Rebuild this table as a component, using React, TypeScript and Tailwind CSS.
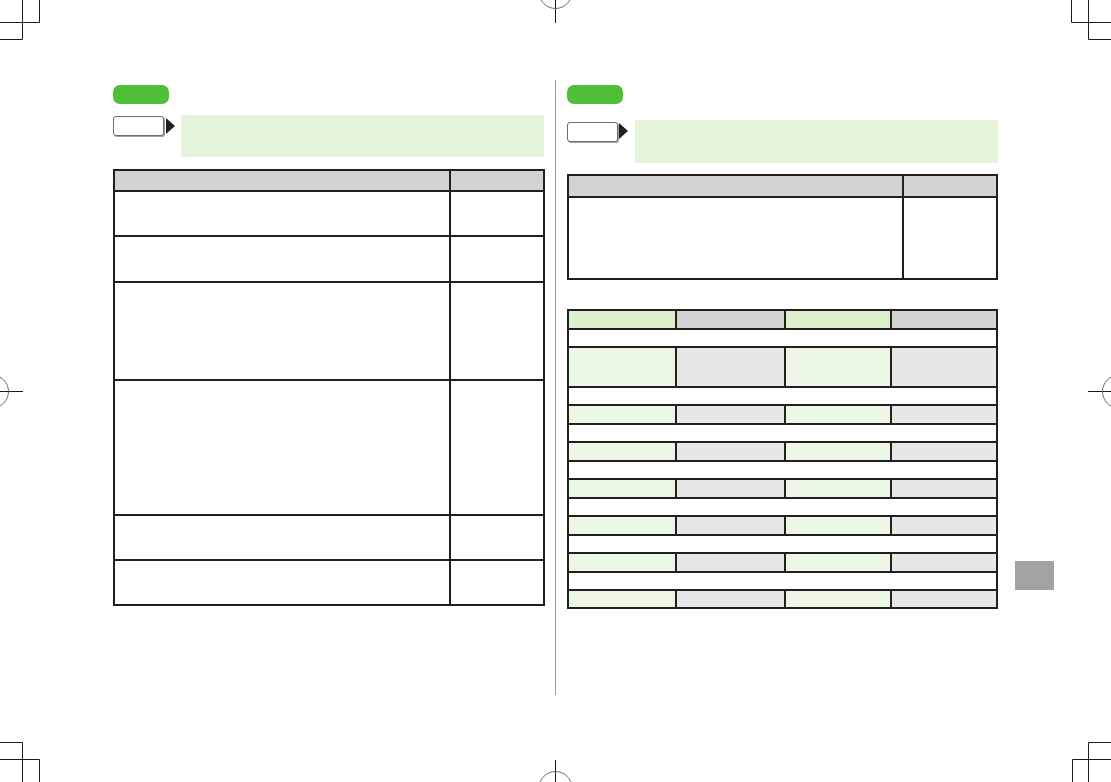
import React from 'react';

// printer's trim marks and registration marks around the page
const PageMarks = () => (
    <svg className="absolute inset-0 pointer-events-none" width={1111} height={782} viewBox="0 0 1111 782" fill="none">
        <g stroke="#1a1a1a" strokeWidth={1}>
            {/* top left */}
            <path d="M22.5 0V39.5M39.5 0V22.5M0 22.5H39.5M0 39.5H22.5" />
            {/* top right */}
            <path d="M1088.5 0V39.5M1071.5 0V22.5M1071.5 22.5H1111M1088.5 39.5H1111" />
            {/* bottom left */}
            <path d="M22.5 742.5V782M39.5 759.5V782M0 742.5H22.5M0 759.5H39.5" />
            {/* bottom right */}
            <path d="M1088.5 742.5V782M1072.5 759.5V782M1088.5 742.5H1111M1072.5 759.5H1111" />
            {/* register lines */}
            <path d="M555.5 0V23M555.5 760V782M0 391.5H23M1088 391.5H1111" />
        </g>
        <g stroke="#6b6b6b" strokeWidth={1}>
            <circle cx={555.5} cy={-8} r={16.5} />
            <circle cx={555.5} cy={788} r={16.5} />
            <circle cx={-8} cy={391.5} r={16.5} />
            <circle cx={1119} cy={391.5} r={16.5} />
        </g>
    </svg>
);

const Pill = () => <div className="w-[56px] h-[19px] rounded-[7px] bg-[#4fbf37]" />;

const StepBox = ({ gap }: { gap: string }) => (
    <div className="flex items-start">
        <div className="mt-[1px] w-[51px] h-[20px] rounded-[3px] border border-[#6d6d6d] bg-white shadow-[1px_1px_0_#a0a0a0]" />
        <svg className="ml-[2px] mt-[3px]" width={9} height={16} viewBox="0 0 9 16">
            <path d="M0 0L9 8L0 16Z" fill="#231f20" />
        </svg>
        <div className={`${gap} w-[363px] h-[42px] bg-[#e3f4db]`} />
    </div>
);

const leftRows = [43, 44, 96, 133, 43, 43];

const table2Rows: { kind: 'data' | 'blank'; h: string }[] = [
    { kind: 'blank', h: 'h-[16px]' },
    { kind: 'data', h: 'h-[38px]' },
    { kind: 'blank', h: 'h-[16px]' },
    { kind: 'data', h: 'h-[17px]' },
    { kind: 'blank', h: 'h-[16px]' },
    { kind: 'data', h: 'h-[17px]' },
    { kind: 'blank', h: 'h-[16px]' },
    { kind: 'data', h: 'h-[17px]' },
    { kind: 'blank', h: 'h-[16px]' },
    { kind: 'data', h: 'h-[17px]' },
    { kind: 'blank', h: 'h-[16px]' },
    { kind: 'data', h: 'h-[17px]' },
    { kind: 'blank', h: 'h-[16px]' },
    { kind: 'data', h: 'h-[16px]' },
];

const App = () => {
    return (
        <div className="relative w-[1111px] h-[782px] overflow-hidden bg-white font-['Liberation_Sans',sans-serif]">
            <div className="flex pt-[85px] pl-[113px]">
                {/* left page */}
                <section className="w-[432px]">
                    <Pill />
                    <div className="mt-[11px]">
                        <StepBox gap="ml-[6px]" />
                    </div>
                    <div className="mt-[12px] grid grid-cols-[334px_92px] gap-[2px] p-[2px] bg-[#231f20]">
                        <div className="h-[19px] bg-[#d2d2d2]" />
                        <div className="h-[19px] bg-[#d2d2d2]" />
                        {leftRows.map((h, i) => (
                            <React.Fragment key={i}>
                                <div className="bg-white" style={{ height: h }} />
                                <div className="bg-white" style={{ height: h }} />
                            </React.Fragment>
                        ))}
                    </div>
                </section>

                <div className="ml-[10px] mt-[-5px] w-px h-[615px] bg-[#9d9d9d]" />

                {/* right page */}
                <section className="ml-[11px] w-[431px]">
                    <Pill />
                    <div className="mt-[16px]">
                        <div className="flex items-start">
                            <div className="mt-[2px] w-[51px] h-[20px] rounded-[3px] border border-[#6d6d6d] bg-white shadow-[1px_1px_0_#a0a0a0]" />
                            <svg className="ml-[1px] mt-[3px]" width={9} height={16} viewBox="0 0 9 16">
                                <path d="M0 0L9 8L0 16Z" fill="#231f20" />
                            </svg>
                            <div className="ml-[7px] w-[363px] h-[43px] bg-[#e3f4db]" />
                        </div>
                    </div>

                    <div className="mt-[11px] grid grid-cols-[333px_92px] gap-[2px] p-[2px] bg-[#231f20]">
                        <div className="h-[20px] bg-[#d2d2d2]" />
                        <div className="h-[20px] bg-[#d2d2d2]" />
                        <div className="h-[80px] bg-white" />
                        <div className="h-[80px] bg-white" />
                    </div>

                    <div className="mt-[29px] grid grid-cols-[106px_107px_104px_104px] gap-[2px] p-[2px] bg-[#231f20]">
                        <div className="h-[17px] bg-[#dcf0cc]" />
                        <div className="h-[17px] bg-[#d2d2d2]" />
                        <div className="h-[17px] bg-[#dcf0cc]" />
                        <div className="h-[17px] bg-[#d2d2d2]" />
                        {table2Rows.map((row, i) =>
                            row.kind === 'blank' ? (
                                <div key={i} className={`col-span-4 bg-white ${row.h}`} />
                            ) : (
                                <React.Fragment key={i}>
                                    <div className={`bg-[#edf7e6] ${row.h}`} />
                                    <div className={`bg-[#e7e7e7] ${row.h}`} />
                                    <div className={`bg-[#edf7e6] ${row.h}`} />
                                    <div className={`bg-[#e7e7e7] ${row.h}`} />
                                </React.Fragment>
                            )
                        )}
                    </div>
                </section>

                {/* index tab */}
                <div className="ml-[17px] mt-[476px] w-[39px] h-[29px] bg-[#a3a3a3]" />
            </div>
            <PageMarks />
        </div>
    );
};

export default App;
